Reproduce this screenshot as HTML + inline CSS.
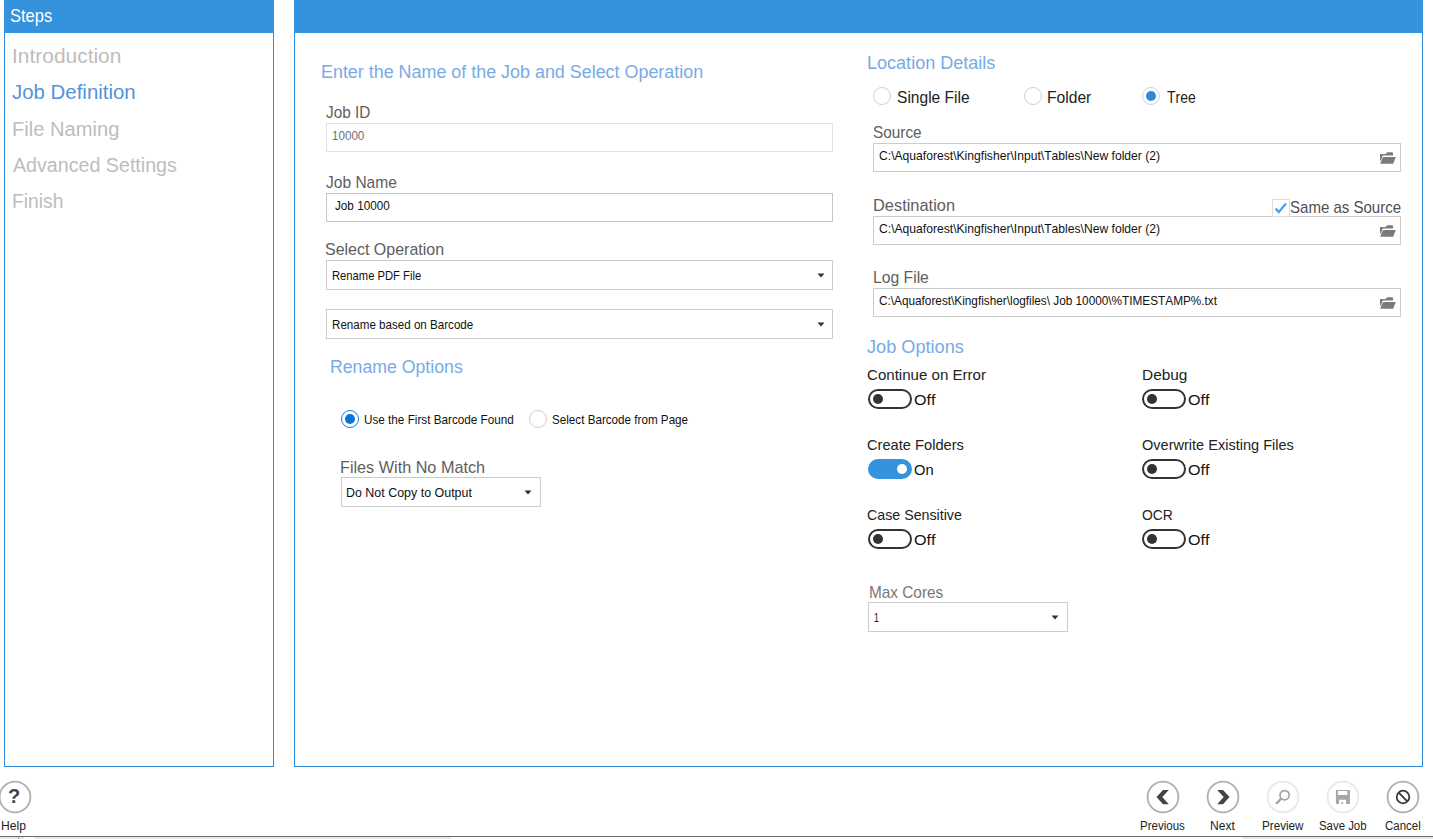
<!DOCTYPE html>
<html><head><meta charset="utf-8"><title>Job Definition</title>
<style>
html,body{margin:0;padding:0;background:#fff;width:1433px;height:839px;overflow:hidden;position:relative}
.t{position:absolute;white-space:nowrap;line-height:1;font-family:"Liberation Sans",sans-serif;font-kerning:none;transform-origin:0 0}
</style></head><body>
<div style="position:absolute;left:4px;top:0px;width:268px;height:765px;border:1px solid #2f8bd9;background:#fff;"></div>
<div style="position:absolute;left:4px;top:0px;width:270px;height:33px;background:#3592dc;"></div>
<div style="position:absolute;left:294px;top:0px;width:1127px;height:765px;border:1px solid #2f8bd9;background:#fff;"></div>
<div style="position:absolute;left:294px;top:0px;width:1129px;height:33px;background:#3592dc;"></div>
<div style="position:absolute;left:326px;top:123px;width:505px;height:27px;border:1px solid #e1e1e1;background:#fff;"></div>
<div style="position:absolute;left:326px;top:193px;width:505px;height:27px;border:1px solid #c6c6c6;background:#fff;"></div>
<div style="position:absolute;left:326px;top:260px;width:505px;height:28px;border:1px solid #cccccc;background:#fff;"></div>
<div style="position:absolute;left:326px;top:309px;width:505px;height:28px;border:1px solid #cccccc;background:#fff;"></div>
<div style="position:absolute;left:341px;top:477px;width:198px;height:28px;border:1px solid #cccccc;background:#fff;"></div>
<div style="position:absolute;left:873px;top:143px;width:526px;height:27px;border:1px solid #cccccc;background:#fff;"></div>
<div style="position:absolute;left:873px;top:216px;width:526px;height:27px;border:1px solid #cccccc;background:#fff;"></div>
<div style="position:absolute;left:873px;top:288px;width:526px;height:27px;border:1px solid #cccccc;background:#fff;"></div>
<div style="position:absolute;left:868px;top:602px;width:198px;height:28px;border:1px solid #cccccc;background:#fff;"></div>
<svg style="position:absolute;left:816.5px;top:272px" width="8" height="6" viewBox="0 0 8 6"><path d="M0.5 1.5 L7.5 1.5 L4 5.5 Z" fill="#333"/></svg>
<svg style="position:absolute;left:816.5px;top:321px" width="8" height="6" viewBox="0 0 8 6"><path d="M0.5 1.5 L7.5 1.5 L4 5.5 Z" fill="#333"/></svg>
<svg style="position:absolute;left:524px;top:489px" width="8" height="6" viewBox="0 0 8 6"><path d="M0.5 1.5 L7.5 1.5 L4 5.5 Z" fill="#333"/></svg>
<svg style="position:absolute;left:1051px;top:614px" width="8" height="6" viewBox="0 0 8 6"><path d="M0.5 1.5 L7.5 1.5 L4 5.5 Z" fill="#333"/></svg>
<svg style="position:absolute;left:1379px;top:151px" width="18" height="14" viewBox="0 0 18 14"><path d="M1 3 L7 3 L7.3 1.9 Q7.6 1.2 8.4 1.2 L13 1.2 Q14 1.2 14 2.3 L14 4.6 L3.6 4.6 L2.1 9.6 L1 9.6 Z" fill="#7b7b7b"/><path d="M4.1 6.1 L16.8 6.1 L14.2 12.8 L1.1 12.8 Z" fill="#7b7b7b"/></svg>
<svg style="position:absolute;left:1379px;top:224px" width="18" height="14" viewBox="0 0 18 14"><path d="M1 3 L7 3 L7.3 1.9 Q7.6 1.2 8.4 1.2 L13 1.2 Q14 1.2 14 2.3 L14 4.6 L3.6 4.6 L2.1 9.6 L1 9.6 Z" fill="#7b7b7b"/><path d="M4.1 6.1 L16.8 6.1 L14.2 12.8 L1.1 12.8 Z" fill="#7b7b7b"/></svg>
<svg style="position:absolute;left:1379px;top:296px" width="18" height="14" viewBox="0 0 18 14"><path d="M1 3 L7 3 L7.3 1.9 Q7.6 1.2 8.4 1.2 L13 1.2 Q14 1.2 14 2.3 L14 4.6 L3.6 4.6 L2.1 9.6 L1 9.6 Z" fill="#7b7b7b"/><path d="M4.1 6.1 L16.8 6.1 L14.2 12.8 L1.1 12.8 Z" fill="#7b7b7b"/></svg>
<svg style="position:absolute;left:340px;top:409px" width="20" height="20" viewBox="0 0 20 20"><circle cx="10" cy="10" r="8.5" fill="#fff" stroke="#1a7fd9" stroke-width="1"/><circle cx="10" cy="10" r="5" fill="#0a74d6"/></svg>
<svg style="position:absolute;left:528px;top:409px" width="20" height="20" viewBox="0 0 20 20"><circle cx="10" cy="10" r="8.5" fill="#fff" stroke="#cfcfcf" stroke-width="1"/></svg>
<svg style="position:absolute;left:872px;top:86px" width="20" height="20" viewBox="0 0 20 20"><circle cx="10" cy="10" r="8.5" fill="#fff" stroke="#cfcfcf" stroke-width="1"/></svg>
<svg style="position:absolute;left:1023px;top:86px" width="20" height="20" viewBox="0 0 20 20"><circle cx="10" cy="10" r="8.5" fill="#fff" stroke="#cfcfcf" stroke-width="1"/></svg>
<svg style="position:absolute;left:1141px;top:86px" width="20" height="20" viewBox="0 0 20 20"><circle cx="10" cy="10" r="8.5" fill="#fff" stroke="#d3d3d3" stroke-width="1"/><circle cx="10" cy="10" r="5" fill="#2a89dc"/></svg>
<div style="position:absolute;left:1272px;top:199px;width:16px;height:16px;border:1px solid #dddddd;background:transparent;"></div>
<svg style="position:absolute;left:1272px;top:199px" width="18" height="18" viewBox="0 0 18 18"><path d="M3.5 9.5 L6.8 13 L14 4.5" fill="none" stroke="#4aa3e8" stroke-width="2.2"/></svg>
<svg style="position:absolute;left:868px;top:389px" width="44" height="20" viewBox="0 0 44 20"><rect x="1" y="1" width="42" height="18" rx="9" fill="#fff" stroke="#333" stroke-width="2"/><circle cx="10" cy="10" r="5" fill="#333"/></svg>
<svg style="position:absolute;left:1142px;top:389px" width="44" height="20" viewBox="0 0 44 20"><rect x="1" y="1" width="42" height="18" rx="9" fill="#fff" stroke="#333" stroke-width="2"/><circle cx="10" cy="10" r="5" fill="#333"/></svg>
<svg style="position:absolute;left:868px;top:459px" width="44" height="20" viewBox="0 0 44 20"><rect x="0" y="0" width="44" height="20" rx="10" fill="#3592dc"/><circle cx="34" cy="10" r="5" fill="#fff"/></svg>
<svg style="position:absolute;left:1142px;top:459px" width="44" height="20" viewBox="0 0 44 20"><rect x="1" y="1" width="42" height="18" rx="9" fill="#fff" stroke="#333" stroke-width="2"/><circle cx="10" cy="10" r="5" fill="#333"/></svg>
<svg style="position:absolute;left:868px;top:529px" width="44" height="20" viewBox="0 0 44 20"><rect x="1" y="1" width="42" height="18" rx="9" fill="#fff" stroke="#333" stroke-width="2"/><circle cx="10" cy="10" r="5" fill="#333"/></svg>
<svg style="position:absolute;left:1142px;top:529px" width="44" height="20" viewBox="0 0 44 20"><rect x="1" y="1" width="42" height="18" rx="9" fill="#fff" stroke="#333" stroke-width="2"/><circle cx="10" cy="10" r="5" fill="#333"/></svg>
<svg style="position:absolute;left:-2.5px;top:780px" width="34" height="34" viewBox="0 0 34 34"><circle cx="17" cy="17" r="15.4" fill="none" stroke="#b0b0b0" stroke-width="1.8"/></svg>
<div style="position:absolute;left:7px;top:786px;width:14px;height:20px;font:bold 20px/20px 'Liberation Sans',sans-serif;color:#444;text-align:center">?</div>
<svg style="position:absolute;left:1146px;top:780px" width="34" height="34" viewBox="0 0 34 34"><circle cx="17" cy="17" r="15.4" fill="none" stroke="#b0b0b0" stroke-width="1.8"/></svg>
<svg style="position:absolute;left:1150px;top:784px" width="26" height="26" viewBox="0 0 26 26"><path d="M18.8 6 L13 6 L6.5 13 L13 20.2 L18.8 20.2 L12.3 13 Z" fill="#444"/></svg>
<svg style="position:absolute;left:1206px;top:780px" width="34" height="34" viewBox="0 0 34 34"><circle cx="17" cy="17" r="15.4" fill="none" stroke="#b0b0b0" stroke-width="1.8"/></svg>
<svg style="position:absolute;left:1210px;top:784px" width="26" height="26" viewBox="0 0 26 26"><path d="M7.2 6 L13 6 L19.5 13 L13 20.2 L7.2 20.2 L13.7 13 Z" fill="#444"/></svg>
<svg style="position:absolute;left:1266px;top:780px" width="34" height="34" viewBox="0 0 34 34"><circle cx="17" cy="17" r="15.4" fill="none" stroke="#e8e8e8" stroke-width="1.8"/></svg>
<svg style="position:absolute;left:1270px;top:784px" width="26" height="26" viewBox="0 0 26 26"><circle cx="14.6" cy="11.2" r="4.6" fill="none" stroke="#a4a4a4" stroke-width="1.7"/><path d="M10.8 15 L6.9 19" stroke="#a4a4a4" stroke-width="2.5" stroke-linecap="round"/></svg>
<svg style="position:absolute;left:1326px;top:780px" width="34" height="34" viewBox="0 0 34 34"><circle cx="17" cy="17" r="15.4" fill="none" stroke="#e8e8e8" stroke-width="1.8"/></svg>
<svg style="position:absolute;left:1330px;top:784px" width="26" height="26" viewBox="0 0 26 26"><path d="M5.9 6 L19.9 6 L19.9 19.9 L5.9 19.9 Z M7.9 6.9 L17.4 6.9 L17.4 11 L7.9 11 Z M9.1 15.7 L16 15.7 L16 19.9 L9.1 19.9 Z" fill="#a6a6a6" fill-rule="evenodd"/><rect x="11" y="18.3" width="2.4" height="1.4" fill="#a6a6a6"/></svg>
<svg style="position:absolute;left:1386px;top:780px" width="34" height="34" viewBox="0 0 34 34"><circle cx="17" cy="17" r="15.4" fill="none" stroke="#b0b0b0" stroke-width="1.8"/></svg>
<svg style="position:absolute;left:1390px;top:784px" width="26" height="26" viewBox="0 0 26 26"><circle cx="13" cy="13" r="6.3" fill="none" stroke="#3a3a3a" stroke-width="1.8"/><path d="M8.7 8.7 L17.3 17.3" stroke="#3a3a3a" stroke-width="1.9"/></svg>
<div style="position:absolute;left:0px;top:836px;width:1433px;height:1px;background:#6e6a6a;"></div>
<div style="position:absolute;left:0px;top:837px;width:1433px;height:2px;background:#e6e6e6;"></div>
<div style="position:absolute;left:18px;top:837px;width:1px;height:2px;background:#b0b0b0;"></div>
<div style="position:absolute;left:24px;top:837px;width:11px;height:2px;background:#ffffff;"></div>
<div style="position:absolute;left:451px;top:837px;width:792px;height:2px;background:#ffffff;"></div>
<div id="steps" class="t" style="left:10.00px;top:7.00px;font-size:18.9px;transform:scaleX(0.8723);color:#ffffff">Steps</div>
<div id="intro" class="t" style="left:12.20px;top:46.00px;font-size:20.35px;transform:scaleX(1.0289);color:#bdbdbd">Introduction</div>
<div id="jobdef" class="t" style="left:11.80px;top:82.00px;font-size:20.35px;transform:scaleX(1.0034);color:#5592da">Job Definition</div>
<div id="filenaming" class="t" style="left:11.80px;top:119.00px;font-size:20.35px;transform:scaleX(0.9888);color:#bdbdbd">File Naming</div>
<div id="adv" class="t" style="left:12.60px;top:154.71px;font-size:20.35px;transform:scaleX(0.9660);color:#bdbdbd">Advanced Settings</div>
<div id="finish" class="t" style="left:11.80px;top:191.40px;font-size:20.35px;transform:scaleX(0.9466);color:#bdbdbd">Finish</div>
<div id="title1" class="t" style="left:320.50px;top:62.81px;font-size:18.9px;transform:scaleX(0.9476);color:#78abe6">Enter the Name of the Job and Select Operation</div>
<div id="jobid" class="t" style="left:326.10px;top:104.90px;font-size:15.99px;transform:scaleX(0.9571);color:#5e5e5e">Job ID</div>
<div id="v10000" class="t" style="left:331.90px;top:129.80px;font-size:12.35px;transform:scaleX(0.9408);color:#707070">10000</div>
<div id="jobname" class="t" style="left:326.10px;top:174.90px;font-size:15.99px;transform:scaleX(0.9728);color:#5e5e5e">Job Name</div>
<div id="vjob" class="t" style="left:335.00px;top:199.80px;font-size:12.35px;transform:scaleX(0.9486);color:#111111">Job 10000</div>
<div id="selop" class="t" style="left:325.00px;top:242.40px;font-size:15.99px;transform:scaleX(1.0001);color:#5e5e5e">Select Operation</div>
<div id="renpdf" class="t" style="left:331.70px;top:270.00px;font-size:12.35px;transform:scaleX(0.9085);color:#111111">Rename PDF File</div>
<div id="renbar" class="t" style="left:331.70px;top:318.80px;font-size:12.35px;transform:scaleX(0.9400);color:#111111">Rename based on Barcode</div>
<div id="renopt" class="t" style="left:330.30px;top:358.10px;font-size:18.9px;transform:scaleX(0.9363);color:#78abe6">Rename Options</div>
<div id="usefirst" class="t" style="left:364.30px;top:414.00px;font-size:12.35px;transform:scaleX(0.9491);color:#111111">Use the First Barcode Found</div>
<div id="selbar" class="t" style="left:551.80px;top:414.00px;font-size:12.35px;transform:scaleX(0.9445);color:#111111">Select Barcode from Page</div>
<div id="fwnm" class="t" style="left:340.00px;top:460.00px;font-size:15.99px;transform:scaleX(1.0142);color:#5e5e5e">Files With No Match</div>
<div id="dncto" class="t" style="left:345.90px;top:486.81px;font-size:12.35px;transform:scaleX(1.0081);color:#111111">Do Not Copy to Output</div>
<div id="locdet" class="t" style="left:866.60px;top:53.50px;font-size:18.9px;transform:scaleX(0.9549);color:#78abe6">Location Details</div>
<div id="single" class="t" style="left:896.70px;top:89.90px;font-size:15.99px;transform:scaleX(0.9734);color:#222222">Single File</div>
<div id="folder" class="t" style="left:1047.40px;top:89.90px;font-size:15.99px;transform:scaleX(0.9783);color:#222222">Folder</div>
<div id="tree" class="t" style="left:1166.80px;top:89.90px;font-size:15.99px;transform:scaleX(0.8755);color:#222222">Tree</div>
<div id="source" class="t" style="left:872.90px;top:124.90px;font-size:15.99px;transform:scaleX(0.9595);color:#5e5e5e">Source</div>
<div id="srcpath" class="t" style="left:878.60px;top:149.80px;font-size:12.35px;transform:scaleX(0.9825);color:#111111">C:\Aquaforest\Kingfisher\Input\Tables\New folder (2)</div>
<div id="dest" class="t" style="left:872.70px;top:197.82px;font-size:15.99px;transform:scaleX(1.0257);color:#5e5e5e">Destination</div>
<div id="same" class="t" style="left:1289.60px;top:199.82px;font-size:15.99px;transform:scaleX(0.9403);color:#505050">Same as Source</div>
<div id="dstpath" class="t" style="left:878.60px;top:222.80px;font-size:12.35px;transform:scaleX(0.9825);color:#111111">C:\Aquaforest\Kingfisher\Input\Tables\New folder (2)</div>
<div id="logfile" class="t" style="left:872.70px;top:270.00px;font-size:15.99px;transform:scaleX(0.9820);color:#5e5e5e">Log File</div>
<div id="logpath" class="t" style="left:878.60px;top:294.70px;font-size:12.35px;transform:scaleX(0.9548);color:#111111">C:\Aquaforest\Kingfisher\logfiles\ Job 10000\%TIMESTAMP%.txt</div>
<div id="jobopt" class="t" style="left:867.00px;top:337.91px;font-size:18.9px;transform:scaleX(0.9601);color:#78abe6">Job Options</div>
<div id="coe" class="t" style="left:867.00px;top:367.00px;font-size:15.0px;transform:scaleX(1.0049);color:#222222">Continue on Error</div>
<div id="off1" class="t" style="left:913.80px;top:391.60px;font-size:15.26px;transform:scaleX(1.0552);color:#111111">Off</div>
<div id="debug" class="t" style="left:1141.70px;top:367.00px;font-size:15.0px;transform:scaleX(1.0277);color:#222222">Debug</div>
<div id="off2" class="t" style="left:1187.80px;top:391.60px;font-size:15.26px;transform:scaleX(1.0552);color:#111111">Off</div>
<div id="cf" class="t" style="left:867.00px;top:437.00px;font-size:15.0px;transform:scaleX(0.9769);color:#222222">Create Folders</div>
<div id="on" class="t" style="left:913.80px;top:461.60px;font-size:15.26px;transform:scaleX(0.9659);color:#111111">On</div>
<div id="oef" class="t" style="left:1141.70px;top:437.00px;font-size:15.0px;transform:scaleX(0.9688);color:#222222">Overwrite Existing Files</div>
<div id="off3" class="t" style="left:1187.80px;top:461.60px;font-size:15.26px;transform:scaleX(1.0552);color:#111111">Off</div>
<div id="cs" class="t" style="left:867.00px;top:507.00px;font-size:15.0px;transform:scaleX(0.9479);color:#222222">Case Sensitive</div>
<div id="off4" class="t" style="left:913.80px;top:531.60px;font-size:15.26px;transform:scaleX(1.0552);color:#111111">Off</div>
<div id="ocr" class="t" style="left:1141.70px;top:507.00px;font-size:15.0px;transform:scaleX(0.9251);color:#222222">OCR</div>
<div id="off5" class="t" style="left:1187.80px;top:531.60px;font-size:15.26px;transform:scaleX(1.0552);color:#111111">Off</div>
<div id="maxc" class="t" style="left:868.50px;top:585.01px;font-size:15.99px;transform:scaleX(0.9605);color:#777777">Max Cores</div>
<div id="one" class="t" style="left:874.00px;top:612.00px;font-size:12.35px;transform:scaleX(0.6962);color:#111111">1</div>
<div id="help" class="t" style="left:1.40px;top:819.01px;font-size:13.08px;transform:scaleX(0.9251);color:#222222">Help</div>
<div id="prev" class="t" style="left:1140.20px;top:819.01px;font-size:13.08px;transform:scaleX(0.8804);color:#222222">Previous</div>
<div id="next" class="t" style="left:1210.00px;top:819.01px;font-size:13.08px;transform:scaleX(0.9231);color:#222222">Next</div>
<div id="preview" class="t" style="left:1262.00px;top:819.01px;font-size:13.08px;transform:scaleX(0.8921);color:#222222">Preview</div>
<div id="save" class="t" style="left:1318.80px;top:819.01px;font-size:13.08px;transform:scaleX(0.8714);color:#222222">Save Job</div>
<div id="cancel" class="t" style="left:1384.60px;top:819.01px;font-size:13.08px;transform:scaleX(0.8766);color:#222222">Cancel</div>
</body></html>
